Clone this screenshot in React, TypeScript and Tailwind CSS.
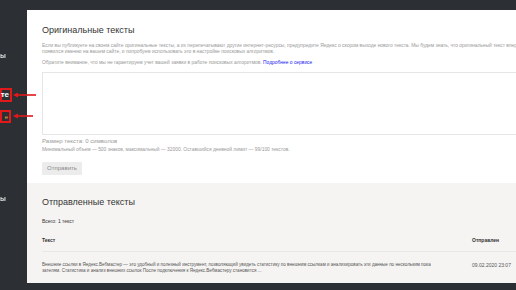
import React from "react";

const Arrow = ({ top, width }: { top: number; width: number }) => (
  <svg
    className="absolute left-[13px]"
    style={{ top }}
    width={width}
    height="6"
    viewBox={`0 0 ${width} 6`}
  >
    <path d={`M0 3 L5 0.5 L5 5.5 Z`} fill="#e0191b" />
    <rect x="4" y="2.2" width={width - 4} height="1.6" fill="#e0191b" />
  </svg>
);

const App = () => {
  return (
    <div className="relative flex h-[290px] w-[516px] flex-col overflow-hidden bg-[#2c2f34] font-['Liberation_Sans',Arial,sans-serif]">
      {/* top bar */}
      <div className="h-[10px] shrink-0 bg-[#2c2f34]" />

      <div className="flex h-[273px] shrink-0">
        {/* sidebar (cropped) */}
        <aside className="flex w-[27px] shrink-0 flex-col bg-[#2c2f34] text-white">
          <div className="mt-[41px] text-[8px] leading-[10px]">ы</div>
          <div className="mt-[27px] flex h-[14px] w-[12px] items-center justify-end border-2 border-[#e0191b] pr-[1px] text-[8px] font-bold leading-none">
            те
          </div>
          <div className="mt-[8px] flex h-[13px] w-[11px] items-center justify-end border-2 border-[#e0191b] pr-[1px] text-[6px] leading-none text-[#e8a33d]">
            е
          </div>
          <div className="mt-[71px] text-[8px] leading-[10px]">ы</div>
        </aside>

        <main className="flex w-[489px] flex-col overflow-hidden">
          {/* original texts */}
          <section className="h-[173px] w-[620px] shrink-0 bg-white pl-[15px] pt-[15px] text-[#999]">
            <h1 className="text-[9px] leading-[11px] text-[#333]">Оригинальные тексты</h1>
            <p className="mt-[7px] whitespace-nowrap text-[4.9px] leading-[6px]">
              Если вы публикуете на своем сайте оригинальные тексты, а их перепечатывают другие интернет-ресурсы,
              предупредите Яндекс о скором выходе нового текста. Мы будем знать, что оригинальный текст впервые
              <br />
              появился именно на вашем сайте, и попробуем использовать это в настройке поисковых алгоритмов.
            </p>
            <p className="mt-[5px] text-[4.9px] leading-[6px]">
              Обратите внимание, что мы не гарантируем учет вашей заявки в работе поисковых алгоритмов.{" "}
              <span className="text-[#2222ee]">Подробнее о сервисе</span>
            </p>
            <div className="mt-[6px] h-[63px] w-[560px] border-[1.5px] border-[#e6e6e6] bg-white" />
            <div className="mt-[2px] text-[6px] leading-[8px] text-[#999]">Размер текста: 0 символов</div>
            <div className="mt-[1px] text-[4.9px] leading-[7px] text-[#999]">
              Минимальный объем — 500 знаков, максимальный — 32000. Оставшийся дневной лимит — 99/100 текстов.
            </div>
            <button className="mt-[4px] h-[13px] w-[40px] rounded-[1px] bg-[#ececec] text-[6px] leading-none text-[#888]">
              Отправить
            </button>
          </section>

          {/* sent texts */}
          <section className="h-[100px] w-[620px] shrink-0 bg-[#f5f4f2] pl-[15px] pt-[14px]">
            <h2 className="text-[9px] leading-[11px] text-[#333]">Отправленные тексты</h2>
            <div className="mt-[10px] text-[5px] leading-[6px] text-[#333]">Всего: 1 текст</div>
            <div className="mt-[13px] flex w-[474px] items-end pb-[8px] text-[5px] font-bold leading-[6px] text-[#333]">
              <div className="w-[430px]">Текст</div>
              <div>Отправлен</div>
            </div>
            <div className="w-[620px] border-t border-[#e9e7e3]" />
            <div className="mt-[10px] flex w-[474px] text-[4.55px] leading-[6px] text-[#555]">
              <div className="w-[430px] whitespace-nowrap">
                Внешние ссылки в Яндекс.Вебмастер — это удобный и полезный инструмент, позволяющий увидеть статистику
                по внешним ссылкам и анализировать эти данные по нескольким пока
                <br />
                зателям. Статистика и анализ внешних ссылок После подключения к Яндекс.Вебмастеру становится ...
              </div>
              <div className="whitespace-nowrap text-[5px]">09.02.2020 23:07</div>
            </div>
          </section>
        </main>
      </div>

      {/* bottom bar */}
      <div className="flex-1 bg-[#2c2f34]" />

      {/* annotation arrows */}
      <Arrow top={92} width={23} />
      <Arrow top={113} width={20} />
    </div>
  );
};

export default App;
